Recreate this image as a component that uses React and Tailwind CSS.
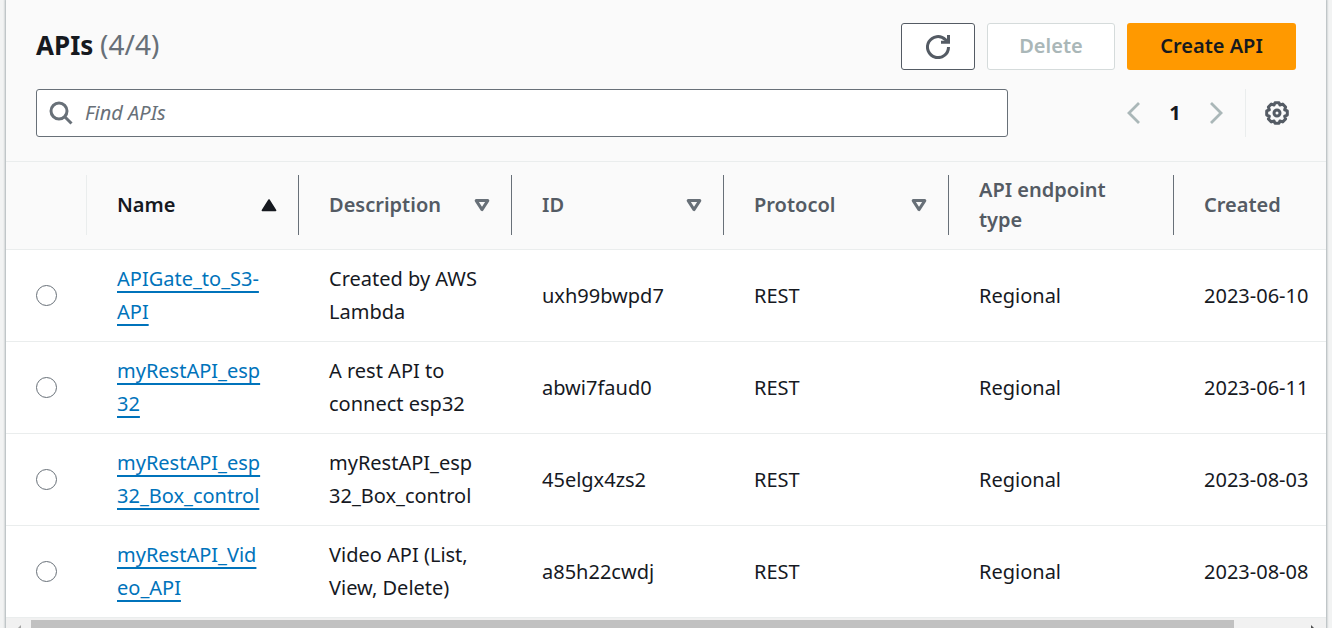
import React from "react";

const rows = [
  { name: ["APIGate_to_S3-", "API"], description: ["Created by AWS", "Lambda"], id: "uxh99bwpd7", created: "2023-06-10" },
  { name: ["myRestAPI_esp", "32"], description: ["A rest API to", "connect esp32"], id: "abwi7faud0", created: "2023-06-11" },
  { name: ["myRestAPI_esp", "32_Box_control"], description: ["myRestAPI_esp", "32_Box_control"], id: "45elgx4zs2", created: "2023-08-03" },
  { name: ["myRestAPI_Vid", "eo_API"], description: ["Video API (List,", "View, Delete)"], id: "a85h22cwdj", created: "2023-08-08" },
];

function Lines({ lines }) {
  return lines.map((line, i) => (
    <React.Fragment key={i}>
      {i > 0 && <br />}
      {line}
    </React.Fragment>
  ));
}

function SortIcon({ active }) {
  return active ? (
    <svg className="h-4 w-4 shrink-0" viewBox="0 0 16 16" aria-hidden="true">
      <path d="M8 3 14.6 13.4H1.4Z" fill="#16191f" stroke="#16191f" strokeWidth="1.6" strokeLinejoin="round" />
    </svg>
  ) : (
    <svg className="h-4 w-4 shrink-0" viewBox="0 0 16 16" aria-hidden="true">
      <path d="M2.2 3.6H13.8L8 12.6Z" fill="none" stroke="#687078" strokeWidth="3" strokeLinejoin="round" />
    </svg>
  );
}

function HeaderCell({ label, sort, last }) {
  return (
    <th scope="col" className="border-b border-[#eaeded] p-0 pt-[13px] pb-[14px] text-left font-semibold">
      <div className={"flex h-[60px] items-center pl-[30px] pr-[21px] " + (last ? "" : "border-r border-[#687078]")}>
        {sort ? (
          <button type="button" className={"flex w-full items-center justify-between text-left " + (sort === "asc" ? "text-[#16191f]" : "")}>
            <span>{label}</span>
            <SortIcon active={sort === "asc"} />
          </button>
        ) : (
          <span>{label}</span>
        )}
      </div>
    </th>
  );
}

function Cell({ children }) {
  return <td className="border-b border-[#eaeded] pt-3 pb-[13px] pl-[30px] align-middle whitespace-nowrap">{children}</td>;
}

export default function App() {
  return (
    <div className="h-screen overflow-hidden bg-[#f2f3f3] px-[6px] font-['Noto_Sans','Open_Sans',sans-serif] text-xl text-[#16191f]">
      <main className="bg-white shadow-[0_0_2px_1px_rgba(0,28,36,0.3)]">
        <header className="border-b border-[#eaeded] bg-[#fafafa] px-[30px] pt-[23px] pb-6">
          <div className="flex items-center justify-between">
            <h1 className="-mt-1 text-[26px] leading-8 font-bold">
              APIs <span className="text-[28px] font-normal text-[#687078]">(4/4)</span>
            </h1>
            <div className="flex gap-3">
              <button type="button" aria-label="Refresh" className="flex h-[47px] w-[74px] items-center justify-center rounded-[3px] border border-[#545b64] bg-white">
                <svg className="h-6 w-6" viewBox="0 0 24 24" fill="none" stroke="#545b64" strokeWidth="3" aria-hidden="true">
                  <path d="M22.500 12A10.500 10.500 0 1 1 19.400 4.600L21.500 7" />
                  <path d="M22.500 0V7.300H15" />
                </svg>
              </button>
              <button type="button" disabled className="h-[47px] w-32 rounded-[3px] border border-[#d5dbdb] bg-white pb-[2px] font-semibold text-[#aab7b8]">
                Delete
              </button>
              <button type="button" className="h-[47px] w-[169px] rounded-[3px] bg-[#ff9900] pb-[2px] font-semibold">
                Create API
              </button>
            </div>
          </div>
          <div className="mt-[19px] flex items-center">
            <label className="mr-[115px] flex h-12 flex-1 items-center gap-3 rounded-[3px] border border-[#687078] bg-white px-3">
              <svg className="h-6 w-6 shrink-0" viewBox="0 0 24 24" fill="none" stroke="#687078" strokeWidth="3" aria-hidden="true">
                <circle cx="10" cy="10" r="8" />
                <path d="M15.500 15.500 22.500 22.500" />
              </svg>
              <input type="text" aria-label="Find APIs" placeholder="Find APIs" className="w-full bg-transparent italic outline-none placeholder:text-[#687078]" />
            </label>
            <nav aria-label="Pagination" className="flex items-center">
              <button type="button" disabled aria-label="Previous page" className="flex w-5 justify-center">
                <svg className="h-6 w-4" viewBox="0 0 16 24" fill="none" stroke="#aab7b8" strokeWidth="2.800" aria-hidden="true">
                  <path d="M14 2 4 12 14 22" />
                </svg>
              </button>
              <button type="button" aria-current="page" className="w-16 text-center font-bold">1</button>
              <button type="button" disabled aria-label="Next page" className="flex w-5 justify-center">
                <svg className="h-6 w-4" viewBox="0 0 16 24" fill="none" stroke="#aab7b8" strokeWidth="2.800" aria-hidden="true">
                  <path d="M2 2 12 12 2 22" />
                </svg>
              </button>
            </nav>
            <div className="ml-[18px] flex h-12 items-center border-l border-[#eaeded] pr-[7px] pl-[19px]">
              <button type="button" aria-label="Preferences">
                <svg className="h-6 w-6" viewBox="0 0 24 24" fill="none" stroke="#545b64" strokeWidth="3" strokeLinejoin="round" aria-hidden="true">
                  <path d="M10 1.700h4l.9 2.300 2.800-.9 2.900 2.900-.9 2.800 2.600 1.100v4.200l-2.600 1.100.9 2.800-2.900 2.900-2.800-.9-.9 2.300h-4l-.9-2.300-2.800.9L3.400 18l.9-2.800-2.600-1.100V9.900l2.600-1.100L3.400 6l2.900-2.900 2.800.9Z" />
                  <circle cx="12" cy="12" r="3" />
                </svg>
              </button>
            </div>
          </div>
        </header>

        <div className="overflow-hidden">
          <table className="w-full min-w-[1390px] table-fixed border-separate border-spacing-0">
            <colgroup>
              <col className="w-[81px]" />
              <col className="w-[212px]" />
              <col className="w-[213px]" />
              <col className="w-[212px]" />
              <col className="w-[225px]" />
              <col className="w-[225px]" />
              <col />
            </colgroup>
            <thead className="bg-[#fafafa] leading-[30px] text-[#545b64]">
              <tr>
                <th scope="col" aria-label="Selection" className="border-b border-[#eaeded] p-0 pt-[13px] pb-[14px]">
                  <div className="h-[60px] border-r border-[#eaeded]" />
                </th>
                <HeaderCell label="Name" sort="asc" />
                <HeaderCell label="Description" sort="none" />
                <HeaderCell label="ID" sort="none" />
                <HeaderCell label="Protocol" sort="none" />
                <HeaderCell label="API endpoint type" />
                <HeaderCell label="Created" last />
              </tr>
            </thead>
            <tbody className="leading-[33px]">
              {rows.map((row) => (
                <tr key={row.id}>
                  <Cell>
                    <input type="radio" name="api" aria-label={row.name.join("")} className="block h-[21px] w-[21px] appearance-none rounded-full border border-[#687078] bg-white checked:border-[6px] checked:border-[#0073bb]" />
                  </Cell>
                  <Cell>
                    <a href="#" className="text-[#0073bb] underline decoration-2 underline-offset-[5px] [text-decoration-skip-ink:none]">
                      <Lines lines={row.name} />
                    </a>
                  </Cell>
                  <Cell><Lines lines={row.description} /></Cell>
                  <Cell>{row.id}</Cell>
                  <Cell>REST</Cell>
                  <Cell>Regional</Cell>
                  <Cell>{row.created}</Cell>
                </tr>
              ))}
            </tbody>
          </table>
        </div>

        <div className="flex h-[25px] items-center bg-[#f1f1f1]" aria-hidden="true">
          <svg className="h-[25px] w-[25px] shrink-0" viewBox="0 0 25 25">
            <path d="M15 7V18L9.500 12.500Z" fill="#a3a3a3" />
          </svg>
          <div className="flex-1">
            <div className="h-[21px] w-[94.7%] bg-[#c1c1c1]" />
          </div>
          <svg className="h-[25px] w-[25px] shrink-0" viewBox="0 0 25 25">
            <path d="M10 7V18L15.500 12.500Z" fill="#505050" />
          </svg>
        </div>
      </main>
    </div>
  );
}
